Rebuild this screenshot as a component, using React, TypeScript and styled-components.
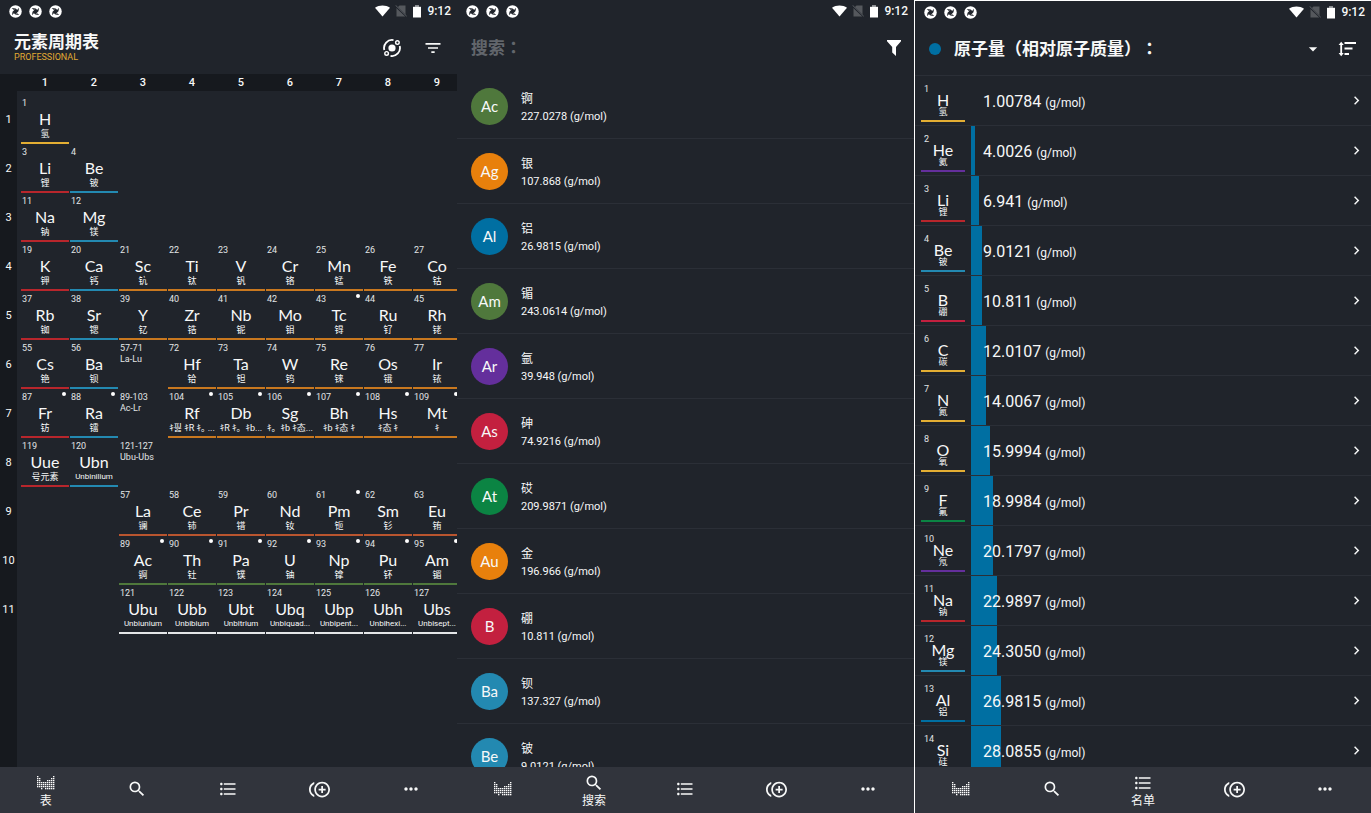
import React from "react";
import styled, { createGlobalStyle } from "styled-components";
import {
  MdArrowDropDown,
  MdChevronRight,
  MdControlPointDuplicate,
  MdFilterList,
  MdFormatListBulleted,
  MdMoreHoriz,
  MdSearch,
} from "react-icons/md";

const c = {
  bg: "#20242b",
  rail: "#16191e",
  nav: "#31343c",
  line: "#2b2f37",
  text: "#f7f8f8",
  muted: "#62666c",
  gold: "#e0aa33",
  blue: "#006fa2",
};

const groupColor = {
  nonmetal: "#e3ae33",
  alkali: "#b8262c",
  earth: "#2389b1",
  transition: "#c9781f",
  metal: "#006fa2",
  metalloid: "#c3203f",
  halogen: "#0b8443",
  noble: "#642f9c",
  lanthanide: "#b9552f",
  actinide: "#4f783c",
  noblemetal: "#e8800c",
  unknown: "#e4e6e8",
};
type Group = keyof typeof groupColor;

const GlobalStyle = createGlobalStyle`
  * { box-sizing: border-box; }
  body {
    margin: 0;
    background: ${c.bg};
    color: ${c.text};
    font-family: Roboto, "Noto Sans CJK SC", sans-serif;
  }
  button, input, select { font: inherit; color: inherit; }
`;

/* ---------- shell ---------- */

const Screens = styled.main`
  display: grid;
  grid-template-columns: repeat(3, minmax(0, 1fr));
  height: 100vh;
`;

const Phone = styled.section<{ $framed?: boolean }>`
  display: flex;
  flex-direction: column;
  min-width: 0;
  min-height: 0;
  background: ${c.bg};
  border: 0 solid #fff;
  border-width: ${(p) => (p.$framed ? "1px 0 0 1px" : "0")};
`;

const Status = styled.div`
  display: flex;
  align-items: center;
  flex: none;
  height: 22px;
  padding: 0 6px 0 9px;
  font-size: 12px;
  font-weight: 500;
  line-height: 14px;
`;

const Notifications = styled.div`
  display: flex;
  gap: 7px;
  flex: 1;
`;

const Signals = styled.div`
  display: flex;
  align-items: center;
  gap: 5px;
`;

const Header = styled.header<{ $end?: number }>`
  display: flex;
  align-items: center;
  flex: none;
  height: 52px;
  padding: 0 ${(p) => p.$end ?? 14}px 0 14px;
`;

const Scroll = styled.div`
  flex: 1;
  min-height: 0;
  overflow: hidden;
`;

const IconButton = styled.button`
  display: flex;
  align-items: center;
  justify-content: center;
  flex: none;
  width: 20px;
  height: 24px;
  padding: 0;
  border: 0;
  background: none;
`;

const Nav = styled.nav`
  display: grid;
  grid-template-columns: repeat(5, 1fr);
  flex: none;
  height: 46px;
  background: ${c.nav};
`;

const NavButton = styled.button<{ $active: boolean }>`
  display: flex;
  flex-direction: column;
  align-items: center;
  justify-content: center;
  padding: ${(p) => (p.$active ? "2px 0 0" : "0 0 2px")};
  border: 0;
  background: none;
  font-size: 12px;
  line-height: 16px;
`;

const NavIcon = styled.span`
  display: flex;
  align-items: center;
  height: 20px;
`;

/* ---------- drawings ---------- */

const Shutter = () => (
  <svg width="13" height="13" viewBox="0 0 24 24" aria-hidden="true">
    <circle cx="12" cy="12" r="11.5" fill="#fff" />
    <path
      d="M12.500 6.500 17.500 11.500 11.500 17.500 6.500 12.500Z M5 5.500 12.500 6.500 9 9Z M18.500 5 17.500 11.500 15 9Z M19 18.500 11.500 17.500 15 15Z M5.500 19 6.500 12.500 9 15Z"
      fill={c.bg}
    />
  </svg>
);

const Wifi = () => (
  <svg width="15" height="12" viewBox="0 0 15 12" aria-hidden="true">
    <path d="M7.500 11.500 0 2.700C4.200-.2 10.800-.2 15 2.700Z" fill="#fff" />
  </svg>
);

const NoSim = () => (
  <svg width="12" height="12" viewBox="0 0 12 12" aria-hidden="true">
    <path d="M4.500 .5H10.500V11.500H1.500V3.500Z" fill="#55585d" />
    <path d="M.5 1 11.500 11.500" stroke={c.bg} strokeWidth="1.800" />
    <path d="M.5 .2 11.700 11.200" stroke="#6b6e73" strokeWidth=".8" />
  </svg>
);

const Battery = () => (
  <svg width="10" height="13" viewBox="0 0 10 13" aria-hidden="true">
    <path d="M3 0h4v2H3z" fill="#8b8e92" />
    <path d="M1 1.800h8V12.500H1z" fill="#fff" />
  </svg>
);

const AtomIcon = () => (
  <svg width="18" height="18" viewBox="0 0 18 18" fill="none" stroke="#fff" aria-hidden="true">
    <circle cx="9" cy="9" r="3.600" fill="#fff" stroke="none" />
    <circle cx="14.400" cy="3.600" r="1.800" strokeWidth="1.400" />
    <circle cx="3.600" cy="14.400" r="1.800" strokeWidth="1.400" />
    <path d="M10.500 1.100A8 8 0 0 0 1.300 11" strokeWidth="1.800" />
    <path d="M7.500 16.900A8 8 0 0 0 16.700 7" strokeWidth="1.800" />
  </svg>
);

const Funnel = () => (
  <svg width="14" height="16" viewBox="0 0 14 16" aria-hidden="true">
    <path d="M0 0H14V1.200L9 7V16L5.200 12.500V7L0 1.200Z" fill="#fff" />
  </svg>
);

const SortIcon = () => (
  <svg width="18" height="16" viewBox="0 0 18 16" fill="none" stroke="#fff" aria-hidden="true">
    <path d="M3.200 3V13M6.500 2H18M6.500 7.500H14.500M6.500 13H11" strokeWidth="1.800" />
    <path d="M.6 4 3.200 .8 5.800 4ZM.6 12 3.200 15.200 5.800 12Z" fill="#fff" stroke="none" />
  </svg>
);

const DOTS = ["#.......#", "##.....##", "##...####", "#########", "#########", "#########", "..#.#####"];

const TableIcon = () => (
  <svg width="18" height="14" viewBox="0 0 18 14" fill="#fff" aria-hidden="true">
    {DOTS.flatMap((row, y) =>
      [...row].map((d, x) =>
        d === "#" ? <rect key={`${x}-${y}`} x={x * 2} y={y * 2} width="1.400" height="1.300" /> : null
      )
    )}
  </svg>
);

const StatusBar = () => (
  <Status>
    <Notifications>
      <Shutter />
      <Shutter />
      <Shutter />
    </Notifications>
    <Signals>
      <Wifi />
      <NoSim />
      <Battery />
      <time>9:12</time>
    </Signals>
  </Status>
);

const NAV = [
  { label: "表", icon: <TableIcon /> },
  { label: "搜索", icon: <MdSearch size={20} /> },
  { label: "名单", icon: <MdFormatListBulleted size={20} /> },
  { label: "添加", icon: <MdControlPointDuplicate size={21} /> },
  { label: "更多", icon: <MdMoreHoriz size={20} /> },
];

const BottomNav = ({ active }: { active: number }) => (
  <Nav>
    {NAV.map((item, i) => (
      <NavButton key={item.label} type="button" $active={i === active} aria-label={item.label}>
        <NavIcon>{item.icon}</NavIcon>
        {i === active && <span>{item.label}</span>}
      </NavButton>
    ))}
  </Nav>
);

/* ---------- element tile ---------- */

const Num = styled.span`
  align-self: flex-start;
  font-size: 9px;
  line-height: 10px;
  color: #e2e4e6;
`;

const Sym = styled.span`
  font-family: Lato, sans-serif;
  font-size: 16px;
`;

const Name = styled.span<{ $latin?: boolean }>`
  font-size: ${(p) => (p.$latin ? "8px" : "9px")};
  white-space: pre;
`;

/* ---------- periodic table ---------- */

const TitleBlock = styled.div`
  flex: 1;
`;

const Title = styled.h1`
  margin: 0;
  font-size: 17px;
  font-weight: 700;
  line-height: 20px;
`;

const Edition = styled.p`
  margin: 0;
  padding-bottom: 2px;
  font-size: 9px;
  line-height: 11px;
  color: ${c.gold};
`;

const HeaderActions = styled.div`
  display: flex;
  gap: 21px;
`;

const TableArea = styled(Scroll)`
  background: linear-gradient(to right, ${c.rail} 17px, transparent 17px);
`;

const Periodic = styled.table`
  width: 462px;
  table-layout: fixed;
  border-spacing: 0;

  td {
    padding: 0;
  }
`;

const ColumnHead = styled.th`
  width: 49px;
  height: 21px;
  padding: 0 1px 0 0;
  border-bottom: 4px solid transparent;
  background: ${c.rail};
  background-clip: padding-box;
  font-size: 11px;
  font-weight: 500;
  line-height: 16px;
`;

const CornerHead = styled(ColumnHead)`
  width: 21px;
`;

const RowHead = styled.th`
  padding: 0 4px 0 0;
  font-size: 11px;
  font-weight: 400;
`;

const Tile = styled.div<{ $color?: string }>`
  position: relative;
  display: flex;
  flex-direction: column;
  align-items: center;
  width: 48px;
  height: 49px;
  padding-top: 3px;
  border-bottom: 2px solid ${(p) => p.$color ?? "transparent"};

  ${Num} {
    padding-left: 1px;
  }
  ${Sym} {
    line-height: 22px;
  }
  ${Name} {
    line-height: 10px;
    margin-top: -1px;
  }
`;

const RadioDot = styled.i`
  position: absolute;
  top: 3px;
  right: 3px;
  width: 4px;
  height: 4px;
  border-radius: 50%;
  background: #fff;
`;

type Cell = { n: string; s?: string; name?: string; g?: Group; dot?: boolean };

const parse = (text: string, g: Group): Cell[] =>
  text.split("|").map((part) => {
    const [n, s, name, dot] = part.split(",");
    return { n, s, name, g, dot: dot === "*" };
  });
const gap = (k: number): null[] => Array(k).fill(null);

const ROWS: (Cell | null)[][] = [
  [...parse("1,H,氢", "nonmetal"), ...gap(8)],
  [...parse("3,Li,锂", "alkali"), ...parse("4,Be,铍", "earth"), ...gap(7)],
  [...parse("11,Na,钠", "alkali"), ...parse("12,Mg,镁", "earth"), ...gap(7)],
  [
    ...parse("19,K,钾", "alkali"),
    ...parse("20,Ca,钙", "earth"),
    ...parse("21,Sc,钪|22,Ti,钛|23,V,钒|24,Cr,铬|25,Mn,锰|26,Fe,铁|27,Co,钴", "transition"),
  ],
  [
    ...parse("37,Rb,铷", "alkali"),
    ...parse("38,Sr,锶", "earth"),
    ...parse("39,Y,钇|40,Zr,锆|41,Nb,铌|42,Mo,钼|43,Tc,锝,*|44,Ru,钌|45,Rh,铑", "transition"),
  ],
  [
    ...parse("55,Cs,铯", "alkali"),
    ...parse("56,Ba,钡", "earth"),
    { n: "57-71\nLa-Lu" },
    ...parse("72,Hf,铪|73,Ta,钽|74,W,钨|75,Re,铼|76,Os,锇|77,Ir,铱", "transition"),
  ],
  [
    ...parse("87,Fr,钫,*", "alkali"),
    ...parse("88,Ra,镭,*", "earth"),
    { n: "89-103\nAc-Lr" },
    ...parse(
      "104,Rf,ｷ핋 ｷR ｷ｡ ...,*|105,Db,ｷR ｷ｡  ｷb...,*|106,Sg,ｷ｡  ｷb ｷ态...,*|107,Bh,ｷb ｷ态 ｷ,*|108,Hs,ｷ态 ｷ,*|109,Mt,ｷ,*",
      "transition"
    ),
  ],
  [...parse("119,Uue,号元素", "alkali"), ...parse("120,Ubn,Unbinilium", "earth"), { n: "121-127\nUbu-Ubs" }, ...gap(6)],
  [...gap(2), ...parse("57,La,镧|58,Ce,铈|59,Pr,镨|60,Nd,钕|61,Pm,钷,*|62,Sm,钐|63,Eu,铕", "lanthanide")],
  [...gap(2), ...parse("89,Ac,锕,*|90,Th,钍,*|91,Pa,镤,*|92,U,铀,*|93,Np,镎,*|94,Pu,钚,*|95,Am,镅,*", "actinide")],
  [
    ...gap(2),
    ...parse(
      "121,Ubu,Unbiunium|122,Ubb,Unbibium|123,Ubt,Unbitrium|124,Ubq,Unbiquad...|125,Ubp,Unbipent...|126,Ubh,Unbihexi...|127,Ubs,Unbisept...",
      "unknown"
    ),
  ],
];

const RangeLabel = styled(Num)`
  white-space: pre;
  line-height: 11px;
`;

const TableScreen = () => (
  <Phone>
    <StatusBar />
    <Header>
      <TitleBlock>
        <Title>元素周期表</Title>
        <Edition>PROFESSIONAL</Edition>
      </TitleBlock>
      <HeaderActions>
        <IconButton type="button" aria-label="原子">
          <AtomIcon />
        </IconButton>
        <IconButton type="button" aria-label="筛选">
          <MdFilterList size={20} />
        </IconButton>
      </HeaderActions>
    </Header>
    <TableArea>
      <Periodic>
        <thead>
          <tr>
            <CornerHead />
            {[1, 2, 3, 4, 5, 6, 7, 8, 9].map((n) => (
              <ColumnHead key={n} scope="col">
                {n}
              </ColumnHead>
            ))}
          </tr>
        </thead>
        <tbody>
          {ROWS.map((row, r) => (
            <tr key={r}>
              <RowHead scope="row">{r + 1}</RowHead>
              {row.map((cell, i) => (
                <td key={i}>
                  {cell && (
                    <Tile $color={cell.g && groupColor[cell.g]}>
                      {cell.s ? (
                        <>
                          <Num>{cell.n}</Num>
                          <Sym>{cell.s}</Sym>
                          <Name $latin={/^Un/.test(cell.name ?? "")}>{cell.name}</Name>
                        </>
                      ) : (
                        <RangeLabel>{cell.n}</RangeLabel>
                      )}
                      {cell.dot && <RadioDot />}
                    </Tile>
                  )}
                </td>
              ))}
            </tr>
          ))}
        </tbody>
      </Periodic>
    </TableArea>
    <BottomNav active={0} />
  </Phone>
);

/* ---------- search ---------- */

const SearchInput = styled.input`
  flex: 1;
  min-width: 0;
  padding: 0;
  border: 0;
  outline: 0;
  background: none;
  font-family: Roboto, "Noto Sans CJK TC", sans-serif;
  font-size: 17px;
  font-weight: 700;

  &::placeholder {
    color: ${c.muted};
    opacity: 1;
  }
`;

const List = styled.ul`
  margin: 0;
  padding: 0;
  list-style: none;
`;

const ResultRow = styled.li`
  display: flex;
  align-items: center;
  gap: 13px;
  height: 65px;
  padding-left: 14px;
  border-bottom: 1px solid ${c.line};
`;

const Disc = styled.span<{ $color: string }>`
  display: flex;
  align-items: center;
  justify-content: center;
  width: 37px;
  height: 37px;
  border-radius: 50%;
  background: ${(p) => p.$color};
  font-family: Lato, sans-serif;
  font-size: 15px;
`;

const ResultText = styled.div`
  display: flex;
  flex-direction: column;
  padding-top: 3px;
  font-size: 11px;
  line-height: 17px;
`;

const ResultName = styled.span`
  font-size: 12px;
`;

const RESULTS: [string, string, string, Group][] = [
  ["Ac", "锕", "227.0278", "actinide"],
  ["Ag", "银", "107.868", "noblemetal"],
  ["Al", "铝", "26.9815", "metal"],
  ["Am", "镅", "243.0614", "actinide"],
  ["Ar", "氩", "39.948", "noble"],
  ["As", "砷", "74.9216", "metalloid"],
  ["At", "砹", "209.9871", "halogen"],
  ["Au", "金", "196.966", "noblemetal"],
  ["B", "硼", "10.811", "metalloid"],
  ["Ba", "钡", "137.327", "earth"],
  ["Be", "铍", "9.0121", "earth"],
];

const SearchScreen = () => (
  <Phone>
    <StatusBar />
    <Header $end={10}>
      <SearchInput type="text" aria-label="搜索" placeholder="搜索：" />
      <IconButton type="button" aria-label="筛选">
        <Funnel />
      </IconButton>
    </Header>
    <Scroll>
      <List>
        {RESULTS.map(([symbol, name, mass, group]) => (
          <ResultRow key={symbol}>
            <Disc $color={groupColor[group]}>{symbol}</Disc>
            <ResultText>
              <ResultName>{name}</ResultName>
              <span>{mass} (g/mol)</span>
            </ResultText>
          </ResultRow>
        ))}
      </List>
    </Scroll>
    <BottomNav active={1} />
  </Phone>
);

/* ---------- property list ---------- */

const SeriesDot = styled.span`
  flex: none;
  width: 12px;
  height: 12px;
  margin-right: 13px;
  border-radius: 50%;
  background: ${c.blue};
`;

const PropertyField = styled.div`
  position: relative;
  flex: 1;
  margin-right: 14px;

  svg {
    position: absolute;
    top: 0;
    right: 0;
    height: 100%;
    pointer-events: none;
  }
`;

const PropertySelect = styled.select`
  display: block;
  width: 100%;
  height: 26px;
  padding: 0;
  border: 0;
  background: none;
  appearance: none;
  font-family: Roboto, "Noto Sans CJK TC", sans-serif;
  font-size: 17px;
  font-weight: 700;
  text-spacing-trim: space-all;
`;

const PropertyRow = styled.li`
  display: flex;
  height: 50px;
  border-top: 1px solid ${c.line};
`;

const MiniTile = styled.div<{ $color: string }>`
  display: flex;
  flex-direction: column;
  align-items: center;
  flex: none;
  width: 44px;
  height: 46px;
  margin: 0 6px;
  padding-top: 8px;
  border-bottom: 2px solid ${(p) => p.$color};

  ${Num} {
    padding-left: 3px;
  }
  ${Sym} {
    line-height: 12px;
  }
  ${Name} {
    padding-top: 1px;
    line-height: 10px;
  }
`;

const Meter = styled.div`
  display: grid;
  flex: 1;
`;

const MeterFill = styled.span`
  grid-area: 1 / 1;
  background: ${c.blue};
`;

const MeterText = styled.span`
  grid-area: 1 / 1;
  align-self: center;
  padding: 4px 0 0 12px;
  font-size: 16px;
  line-height: 20px;
`;

const Unit = styled.small`
  font-size: 12px;
`;

const RowButton = styled(IconButton)`
  align-self: center;
  margin-right: 5px;
`;

const MASSES: [string, string, string, Group, number][] = [
  ["H", "氢", "1.00784", "nonmetal", 0],
  ["He", "氦", "4.0026", "noble", 4],
  ["Li", "锂", "6.941", "alkali", 8],
  ["Be", "铍", "9.0121", "earth", 11],
  ["B", "硼", "10.811", "metalloid", 11],
  ["C", "碳", "12.0107", "nonmetal", 15],
  ["N", "氮", "14.0067", "nonmetal", 15],
  ["O", "氧", "15.9994", "nonmetal", 19],
  ["F", "氟", "18.9984", "halogen", 22],
  ["Ne", "氖", "20.1797", "noble", 22],
  ["Na", "钠", "22.9897", "alkali", 26],
  ["Mg", "镁", "24.3050", "earth", 26],
  ["Al", "铝", "26.9815", "metal", 30],
  ["Si", "硅", "28.0855", "metalloid", 30],
];

const ListScreen = () => (
  <Phone $framed>
    <StatusBar />
    <Header>
      <SeriesDot />
      <PropertyField>
        <PropertySelect aria-label="属性">
          <option>原子量（相对原子质量）：</option>
        </PropertySelect>
        <MdArrowDropDown size={20} />
      </PropertyField>
      <IconButton type="button" aria-label="排序">
        <SortIcon />
      </IconButton>
    </Header>
    <Scroll>
      <List>
        {MASSES.map(([symbol, name, mass, group, width], i) => (
          <PropertyRow key={symbol}>
            <MiniTile $color={groupColor[group]}>
              <Num>{i + 1}</Num>
              <Sym>{symbol}</Sym>
              <Name>{name}</Name>
            </MiniTile>
            <Meter>
              <MeterFill style={{ width }} />
              <MeterText>
                {mass} <Unit>(g/mol)</Unit>
              </MeterText>
            </Meter>
            <RowButton type="button" aria-label={name}>
              <MdChevronRight size={17} />
            </RowButton>
          </PropertyRow>
        ))}
      </List>
    </Scroll>
    <BottomNav active={2} />
  </Phone>
);

export default function App() {
  return (
    <>
      <GlobalStyle />
      <Screens>
        <TableScreen />
        <SearchScreen />
        <ListScreen />
      </Screens>
    </>
  );
}
